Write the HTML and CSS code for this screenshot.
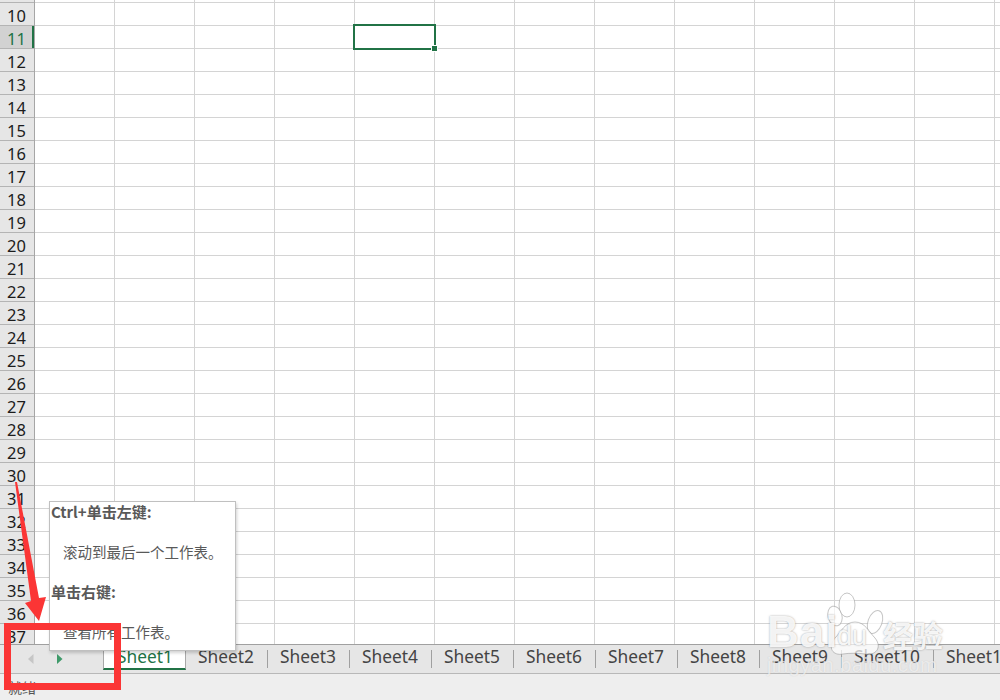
FILE: index.html
```html
<!DOCTYPE html>
<html lang="zh">
<head>
<meta charset="utf-8">
<title>Sheet</title>
<link rel="stylesheet" href="styles.css">
</head>
<body>
<div class="app">
  <div class="sheet">
    <div class="rowhead">
      <div class="stub"></div>
      <div class="rn">10</div>
      <div class="rn active">11</div>
      <div class="rn">12</div><div class="rn">13</div><div class="rn">14</div><div class="rn">15</div>
      <div class="rn">16</div><div class="rn">17</div><div class="rn">18</div><div class="rn">19</div>
      <div class="rn">20</div><div class="rn">21</div><div class="rn">22</div><div class="rn">23</div>
      <div class="rn">24</div><div class="rn">25</div><div class="rn">26</div><div class="rn">27</div>
      <div class="rn">28</div><div class="rn">29</div><div class="rn">30</div><div class="rn">31</div>
      <div class="rn">32</div><div class="rn">33</div><div class="rn">34</div><div class="rn">35</div>
      <div class="rn">36</div><div class="rn">37</div>
    </div>
    <div class="cells"></div>
  </div>
  <div class="tabs">
    <div class="nav">
      <svg class="navicon" width="6" height="10" viewBox="0 0 6 10"><path class="nav-off" d="M5.500 0V10L0 5Z"/></svg>
      <svg class="navicon" width="6" height="10" viewBox="0 0 6 10"><path class="nav-on" d="M0 0V10L5.500 5Z"/></svg>
    </div>
    <div class="tab current">Sheet1</div>
    <div class="tab">Sheet2</div>
    <div class="tab">Sheet3</div>
    <div class="tab">Sheet4</div>
    <div class="tab">Sheet5</div>
    <div class="tab">Sheet6</div>
    <div class="tab">Sheet7</div>
    <div class="tab">Sheet8</div>
    <div class="tab">Sheet9</div>
    <div class="tab">Sheet10</div>
    <div class="tab">Sheet11</div>
  </div>
  <div class="status">就绪</div>
</div>

<div class="selection"><span class="handle"></span></div>

<div class="tip">
  <p class="tip-title">Ctrl+单击左键:</p>
  <p class="tip-desc">滚动到最后一个工作表。</p>
  <p class="tip-title">单击右键:</p>
  <p class="tip-desc">查看所有工作表。</p>
</div>

<svg class="paw" width="100" height="80" viewBox="0 0 100 80">
  <g class="paw-shape">
    <ellipse cx="36" cy="24" rx="7" ry="10" transform="rotate(-15 36 24)"/>
    <ellipse cx="48" cy="13" rx="8" ry="12"/>
    <ellipse cx="76" cy="30" rx="7" ry="12" transform="rotate(20 76 30)"/>
    <path d="M56 30C66 30 70 40 76 46C84 56 76 64 66 62C60 61 50 61 44 62C34 64 28 56 36 46C42 40 46 30 56 30Z"/>
  </g>
</svg>
<div class="mark">
  <div class="mark-top"><span class="mark-bai">Bai</span><span class="mark-du">du</span><span class="mark-cn">经验</span></div>
  <div class="mark-url">jingyan.baidu.com</div>
</div>

<div class="redbox"></div>
<svg class="arrow" width="60" height="150" viewBox="0 0 60 150">
  <polygon class="arrow-fill" points="15,2 17,2 39,118 46,117 39,141 25,123 31,121"/>
</svg>
</body>
</html>
```
FILE: styles.css
```css
* { box-sizing: border-box; }
html, body { margin: 0; padding: 0; }
body {
  width: 1000px;
  height: 700px;
  overflow: hidden;
  position: relative;
  background: #fff;
  font-family: "Noto Sans", "Noto Sans CJK SC", sans-serif;
}
.app { display: flex; flex-direction: column; height: 700px; }
.sheet { display: flex; height: 644px; overflow: hidden; }
.rowhead {
  width: 35px;
  flex: none;
  background: #e6e6e6;
  border-right: 1px solid #a6a6a6;
}
.stub { height: 3px; border-bottom: 1px solid #b4b4b4; }
.rn {
  height: 23px;
  border-bottom: 1px solid #b4b4b4;
  font-size: 16.500px;
  line-height: 25px;
  text-align: center;
  color: #1c1c1c;
  padding-right: 1px;
}
.rn.active {
  background: #d2d2d2;
  color: #217346;
  box-shadow: inset -2px 0 0 #217346;
}
.cells {
  flex: 1;
  background-color: #fff;
  background-image:
    linear-gradient(to right, transparent 79px, #d4d4d4 79px),
    linear-gradient(to bottom, transparent 22px, #d4d4d4 22px);
  background-size: 80px 23px;
  background-position: 0 3px;
}
.tabs {
  display: flex;
  height: 30px;
  flex: none;
  overflow: hidden;
  background: #e6e6e6;
  border-top: 1px solid #a0a0a0;
  border-bottom: 1px solid #b8b8b8;
}
.nav {
  width: 103px;
  flex: none;
  display: flex;
  gap: 23px;
  padding: 9px 0 0 28px;
}
.navicon { display: block; }
.nav-off { fill: #c6c6c6; }
.nav-on { fill: #3f9a6a; }
.tab {
  flex: none;
  height: 18px;
  margin-top: 5px;
  padding: 0 13px 0 12px;
  font-size: 17.350px;
  line-height: 13px;
  color: #444;
  border-right: 1px solid #a0a0a0;
  white-space: nowrap;
}
.tab.current {
  height: 25px;
  margin-top: 0;
  width: 83px;
  padding: 5px 0 0 13px;
  background: #fff;
  color: #217346;
  border-left: 1px solid #a8a8a8;
  border-right: 1px solid #a8a8a8;
  border-bottom: 2px solid #217346;
}
.status {
  flex: 1;
  background: #eee;
  color: #555;
  font-family: "Noto Sans CJK SC", sans-serif;
  font-size: 14px;
  line-height: 22px;
  padding: 2px 0 0 8px;
}
.selection {
  position: absolute;
  left: 353px;
  top: 24px;
  width: 83px;
  height: 26px;
  border: 2px solid #217346;
}
.handle {
  position: absolute;
  right: -3px;
  bottom: -3px;
  width: 5px;
  height: 5px;
  background: #217346;
  outline: 1px solid #fff;
}
.tip {
  position: absolute;
  left: 49px;
  top: 501px;
  width: 187px;
  height: 150px;
  overflow: hidden;
  padding: 0 0 0 1px;
  background: #fff;
  border: 1px solid #c0c0c0;
  box-shadow: 1px 2px 3px rgba(0, 0, 0, .18);
  font-family: "Noto Sans CJK SC", sans-serif;
  font-size: 14.500px;
  line-height: 20px;
  color: #595959;
}
.tip p { margin: 0 0 20px; white-space: nowrap; }
.tip-title { font-weight: 700; font-size: 15px; }
.tip-desc { padding-left: 12px; }
.paw { position: absolute; left: 799px; top: 592px; }
.paw-shape ellipse, .paw-shape path {
  fill: rgba(255, 255, 255, .7);
  stroke: rgba(150, 150, 150, .55);
  stroke-width: 1;
}
.mark {
  position: absolute;
  left: 767px;
  top: 610px;
  width: 190px;
  color: rgba(255, 255, 255, .9);
  text-shadow: 0 0 2px rgba(110, 110, 110, .65);
  font-family: "Liberation Sans", sans-serif;
}
.mark-top { display: flex; align-items: flex-end; height: 44px; }
.mark-bai { font-size: 44px; line-height: 44px; font-weight: 700; width: 70px; letter-spacing: 1px; }
.mark-du { font-size: 27px; line-height: 36px; width: 46px; }
.mark-cn { font-family: "Noto Sans CJK SC", sans-serif; font-size: 30px; line-height: 40px; font-weight: 700; }
.mark-url {
  font-size: 20.500px;
  line-height: 24px;
  margin-top: -1px;
  letter-spacing: .3px;
  color: rgba(255, 255, 255, .65);
  text-shadow: 0 0 1px rgba(150, 150, 150, .4);
}
.redbox {
  position: absolute;
  left: 4px;
  top: 623px;
  width: 117px;
  height: 67px;
  border: 7px solid #fb3535;
}
.arrow { position: absolute; left: 0; top: 480px; }
.arrow-fill { fill: #fb3535; }
```
